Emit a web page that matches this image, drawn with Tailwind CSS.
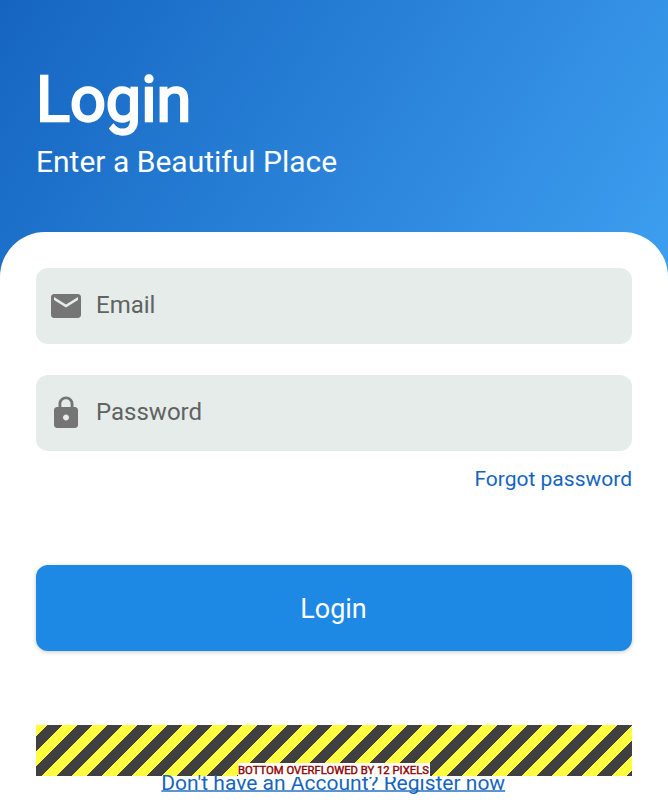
<!DOCTYPE html>
<html lang="en">
<head>
<meta charset="utf-8">
<title>Login</title>
<script src="https://cdn.jsdelivr.net/npm/@tailwindcss/browser@4"></script>
</head>
<body class="h-[812px] overflow-hidden bg-[linear-gradient(122.6deg,#1565c0_0px,#42a5f5_793px)] font-['Roboto',sans-serif]">
<div class="flex h-full flex-col">
  <header class="h-[232px] shrink-0 px-9 pt-[61px] text-white">
    <h1 class="h-[78px] text-[63px] leading-[78px] font-normal [-webkit-text-stroke:2.4px_white]">Login</h1>
    <p class="mt-[5px] text-[30px] leading-[36px]">Enter a Beautiful Place</p>
  </header>
  <main class="flex flex-1 flex-col rounded-t-[45px] bg-white px-9 pt-9">
    <label class="flex h-[76.400px] shrink-0 items-center rounded-xl bg-[#e6ecea] pl-3 text-2xl text-[#606362]">
      <svg class="mr-3 h-9 w-9 shrink-0 fill-[#757575]" viewBox="0 0 24 24"><path d="M20 4H4c-1.1 0-1.99.9-1.99 2L2 18c0 1.1.9 2 2 2h16c1.1 0 2-.9 2-2V6c0-1.100-.9-2-2-2zm0 4l-8 5-8-5V6l8 5 8-5v2z"/></svg>
      <span class="-mt-0.5">Email</span>
    </label>
    <label class="mt-[30.200px] flex h-[76px] shrink-0 items-center rounded-xl bg-[#e6ecea] pl-3 text-2xl text-[#606362]">
      <svg class="mr-3 h-9 w-9 shrink-0 fill-[#757575]" viewBox="0 0 24 24"><path d="M18 8h-1V6c0-2.760-2.240-5-5-5S7 3.240 7 6v2H6c-1.100 0-2 .9-2 2v10c0 1.100.9 2 2 2h12c1.100 0 2-.9 2-2V10c0-1.100-.9-2-2-2zm-6 9c-1.100 0-2-.9-2-2s.9-2 2-2 2 .9 2 2-.9 2-2 2zm3.100-9H8.900V6c0-1.710 1.390-3.100 3.100-3.100 1.710 0 3.100 1.390 3.100 3.100v2z"/></svg>
      <span class="-mt-0.5">Password</span>
    </label>
    <a class="mt-[16.400px] h-6 self-end text-[21px] leading-6 text-[#1565c0]">Forgot password</a>
    <button class="mt-[74px] h-[85.600px] shrink-0 rounded-xl bg-[#1e88e5] pt-[3px] pr-px text-[27px] text-white shadow-[0_1px_4px_rgba(0,0,0,0.22)]">Login</button>
    <div class="mt-[74.400px] flex h-[51px] shrink-0 items-end justify-center bg-[repeating-linear-gradient(135deg,#ffff40_0px,#ffff40_8.100px,#404040_8.100px,#404040_18.710px,#ffff40_18.710px,#ffff40_21.213px)]">
      <span class="relative z-10 -mb-px h-[14px] bg-white pr-[1px] text-[11.25px] leading-[16px] whitespace-nowrap text-[#900000] [-webkit-text-stroke:0.4px_#900000]">BOTTOM OVERFLOWED BY 12 PIXELS</span>
    </div>
    <a class="-mt-[5px] mr-[1.500px] h-6 self-center text-[21px] leading-6 text-[#1565c0] underline decoration-[#1565c0]/70 decoration-[1.500px] underline-offset-0 [text-decoration-skip-ink:none]">Don't have an Account? Register now</a>
  </main>
</div>
</body>
</html>
